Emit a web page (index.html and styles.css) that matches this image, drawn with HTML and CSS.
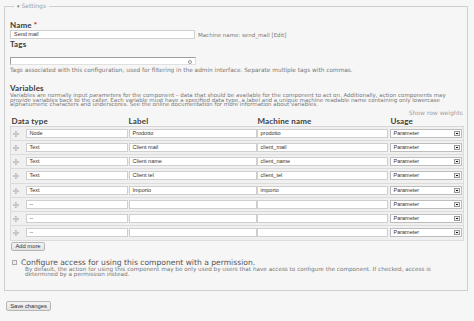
FILE: index.html
```html
<!DOCTYPE html>
<html>
<head>
<meta charset="utf-8">
<link rel="stylesheet" href="styles.css">
</head>
<body>
<div class="page">
  <fieldset class="settings">
    <legend><span class="tri">▾</span> Settings</legend>

    <div class="item item-name">
      <div class="lbl">Name <span class="req">*</span></div>
      <div class="name-row">
        <div class="input name-input">Send mail</div>
        <span class="mname">Machine name: send_mail [Edit]</span>
      </div>
    </div>

    <div class="item item-tags">
      <div class="lbl">Tags</div>
      <div class="input tags-input"><span class="ac"></span></div>
      <div class="desc tags-desc">Tags associated with this configuration, used for filtering in the admin interface. Separate multiple tags with commas.</div>
    </div>

    <div class="item item-vars">
      <div class="lbl">Variables</div>
      <div class="desc vars-desc">Variables are normally input <em>parameters</em> for the component – data that should be available for the component to act on. Additionally, action components may <em>provide</em> variables back to the caller. Each variable must have a specified data type, a label and a unique machine readable name containing only lowercase alphanumeric characters and underscores. See the online documentation for more information about variables.</div>
      <div class="weights">Show row weights</div>
      <table class="vars">
        <colgroup>
          <col class="w-drag"><col class="w-type"><col class="w-label"><col class="w-mach"><col class="w-use">
        </colgroup>
        <thead>
          <tr><th colspan="2">Data type</th><th>Label</th><th>Machine name</th><th>Usage</th></tr>
        </thead>
        <tbody>
          <tr><td class="drag"><svg viewBox="0 0 10 10" width="6" height="6"><path d="M5 0.5 V9.5 M0.5 5 H9.5 M3.5 2 L5 0.5 L6.5 2 M3.5 8 L5 9.5 L6.5 8 M2 3.5 L0.5 5 L2 6.5 M8 3.5 L9.5 5 L8 6.5" fill="none" stroke="#9a9a9a" stroke-width="1"/></svg></td><td class="c-type"><div class="input">Node</div></td><td class="c-label"><div class="input">Prodotto</div></td><td class="c-mach"><div class="input">prodotto</div></td><td class="c-use"><div class="select">Parameter<span class="btn"></span></div></td></tr>
          <tr><td class="drag"><svg viewBox="0 0 10 10" width="6" height="6"><path d="M5 0.5 V9.5 M0.5 5 H9.5 M3.5 2 L5 0.5 L6.5 2 M3.5 8 L5 9.5 L6.5 8 M2 3.5 L0.5 5 L2 6.5 M8 3.5 L9.5 5 L8 6.5" fill="none" stroke="#9a9a9a" stroke-width="1"/></svg></td><td class="c-type"><div class="input">Text</div></td><td class="c-label"><div class="input">Client mail</div></td><td class="c-mach"><div class="input">client_mail</div></td><td class="c-use"><div class="select">Parameter<span class="btn"></span></div></td></tr>
          <tr><td class="drag"><svg viewBox="0 0 10 10" width="6" height="6"><path d="M5 0.5 V9.5 M0.5 5 H9.5 M3.5 2 L5 0.5 L6.5 2 M3.5 8 L5 9.5 L6.5 8 M2 3.5 L0.5 5 L2 6.5 M8 3.5 L9.5 5 L8 6.5" fill="none" stroke="#9a9a9a" stroke-width="1"/></svg></td><td class="c-type"><div class="input">Text</div></td><td class="c-label"><div class="input">Client name</div></td><td class="c-mach"><div class="input">client_name</div></td><td class="c-use"><div class="select">Parameter<span class="btn"></span></div></td></tr>
          <tr><td class="drag"><svg viewBox="0 0 10 10" width="6" height="6"><path d="M5 0.5 V9.5 M0.5 5 H9.5 M3.5 2 L5 0.5 L6.5 2 M3.5 8 L5 9.5 L6.5 8 M2 3.5 L0.5 5 L2 6.5 M8 3.5 L9.5 5 L8 6.5" fill="none" stroke="#9a9a9a" stroke-width="1"/></svg></td><td class="c-type"><div class="input">Text</div></td><td class="c-label"><div class="input">Client tel</div></td><td class="c-mach"><div class="input">client_tel</div></td><td class="c-use"><div class="select">Parameter<span class="btn"></span></div></td></tr>
          <tr><td class="drag"><svg viewBox="0 0 10 10" width="6" height="6"><path d="M5 0.5 V9.5 M0.5 5 H9.5 M3.5 2 L5 0.5 L6.5 2 M3.5 8 L5 9.5 L6.5 8 M2 3.5 L0.5 5 L2 6.5 M8 3.5 L9.5 5 L8 6.5" fill="none" stroke="#9a9a9a" stroke-width="1"/></svg></td><td class="c-type"><div class="input">Text</div></td><td class="c-label"><div class="input">Importo</div></td><td class="c-mach"><div class="input">importo</div></td><td class="c-use"><div class="select">Parameter<span class="btn"></span></div></td></tr>
          <tr><td class="drag"><svg viewBox="0 0 10 10" width="6" height="6"><path d="M5 0.5 V9.5 M0.5 5 H9.5 M3.5 2 L5 0.5 L6.5 2 M3.5 8 L5 9.5 L6.5 8 M2 3.5 L0.5 5 L2 6.5 M8 3.5 L9.5 5 L8 6.5" fill="none" stroke="#9a9a9a" stroke-width="1"/></svg></td><td class="c-type"><div class="input">--</div></td><td class="c-label"><div class="input"></div></td><td class="c-mach"><div class="input"></div></td><td class="c-use"><div class="select">Parameter<span class="btn"></span></div></td></tr>
          <tr><td class="drag"><svg viewBox="0 0 10 10" width="6" height="6"><path d="M5 0.5 V9.5 M0.5 5 H9.5 M3.5 2 L5 0.5 L6.5 2 M3.5 8 L5 9.5 L6.5 8 M2 3.5 L0.5 5 L2 6.5 M8 3.5 L9.5 5 L8 6.5" fill="none" stroke="#9a9a9a" stroke-width="1"/></svg></td><td class="c-type"><div class="input">--</div></td><td class="c-label"><div class="input"></div></td><td class="c-mach"><div class="input"></div></td><td class="c-use"><div class="select">Parameter<span class="btn"></span></div></td></tr>
          <tr><td class="drag"><svg viewBox="0 0 10 10" width="6" height="6"><path d="M5 0.5 V9.5 M0.5 5 H9.5 M3.5 2 L5 0.5 L6.5 2 M3.5 8 L5 9.5 L6.5 8 M2 3.5 L0.5 5 L2 6.5 M8 3.5 L9.5 5 L8 6.5" fill="none" stroke="#9a9a9a" stroke-width="1"/></svg></td><td class="c-type"><div class="input">--</div></td><td class="c-label"><div class="input"></div></td><td class="c-mach"><div class="input"></div></td><td class="c-use"><div class="select">Parameter<span class="btn"></span></div></td></tr>
        </tbody>
      </table>
      <div class="button add-more">Add more</div>
    </div>

    <div class="item item-perm">
      <div class="check-row"><span class="checkbox"></span><span class="check-lbl">Configure access for using this component with a permission.</span></div>
      <div class="desc perm-desc">By default, the action for using this component may be only used by users that have access to configure the component. If checked, access is determined by a permission instead.</div>
    </div>
  </fieldset>

  <div class="button save">Save changes</div>
</div>
</body>
</html>
```

FILE: styles.css
```css
* { box-sizing: border-box; }

html, body {
  margin: 0;
  padding: 0;
  background: #f6f6f6;
}

body {
  font-family: "DejaVu Sans", Lato, sans-serif;
  color: #444;
  font-size: 5.5px;
}

.page {
  padding: 2px 0 0 4px;
  width: 474px;
  height: 321px;
}

.settings {
  width: 463px;
  margin: 0;
  border: 1px solid #cfcfcf;
  padding: 0 3px 13px 5px;
}

.settings legend {
  padding: 0 3px;
  margin-left: 4px;
  font-size: 6px;
  line-height: 8px;
  color: #a0a0a0;
}

.tri {
  font-size: 5px;
  color: #777;
}

.lbl {
  font-family: Lato, "DejaVu Sans", sans-serif;
  font-size: 8px;
  line-height: 8px;
  font-weight: bold;
  color: #3d3d3d;
  letter-spacing: 0.15px;
}

.req { color: #d00; }

.item-name { margin-top: 11px; }

.name-row {
  display: flex;
  align-items: center;
  margin-top: 1px;
}

.input {
  background: #fff;
  border: 1px solid #cfcfcf;
  height: 9px;
  font-size: 5.5px;
  line-height: 7px;
  padding: 0 3px;
  color: #333;
  font-family: "Liberation Sans", Arial, sans-serif;
  white-space: nowrap;
  overflow: hidden;
}

.name-input { width: 185px; }

.mname {
  margin-left: 3px;
  font-size: 5.5px;
  color: #777;
}

.item-tags { margin-top: 1px; }

.tags-input {
  width: 186px;
  margin-top: 9px;
  position: relative;
  border-color: #9d9d9d #e0e0e0 #e0e0e0 #9d9d9d;
  height: 8px;
}

.ac {
  position: absolute;
  right: 3px;
  top: 2px;
  width: 4px;
  height: 4px;
  border: 1px solid #999;
  border-radius: 50%;
}

.desc {
  font-size: 5.5px;
  color: #777;
}

.tags-desc {
  margin-top: 2px;
  line-height: 7px;
  font-size: 5.8px;
}

.item-vars { margin-top: 10px; }

.vars-desc {
  line-height: 4.7px;
  margin-top: 1px;
}

.vars-desc em { font-style: italic; }

.weights {
  text-align: right;
  font-size: 6px;
  line-height: 6px;
  color: #a0a0a0;
  margin-top: 3px;
  padding-right: 1px;
}

table.vars {
  border-collapse: collapse;
  width: 453px;
  margin-top: 0;
  table-layout: fixed;
}

col.w-drag { width: 15px; }
col.w-type { width: 102px; }
col.w-label { width: 129px; }
col.w-mach { width: 133px; }
col.w-use { width: 74px; }

table.vars th {
  text-align: left;
  font-family: Lato, "DejaVu Sans", sans-serif;
  font-size: 8px;
  font-weight: bold;
  color: #3d3d3d;
  height: 10px;
  padding: 0 0 0 1px;
  border-bottom: 1px solid #d6d6d6;
  line-height: 8px;
  letter-spacing: 0.15px;
}

table.vars td {
  height: 14.25px;
  padding: 0;
  border-bottom: 1px solid #dcdcdc;
  background: #f0f0f0;
  vertical-align: middle;
}

table.vars td.drag {
  padding-left: 2px;
  padding-top: 1px;
  border-left: 1px solid #dcdcdc;
}

table.vars td.drag svg { display: block; }

td.c-label { padding-left: 1px !important; }
td.c-mach { padding-right: 2px !important; }
td.c-use { padding-right: 1px !important; border-right: 1px solid #dcdcdc; }

td .input { width: 100%; }

.select {
  position: relative;
  background: #fff;
  border: 1px solid #bdbdbd;
  height: 9px;
  font-size: 5.5px;
  line-height: 7px;
  padding: 0 3px;
  color: #333;
  font-family: "Liberation Sans", Arial, sans-serif;
}

.select .btn {
  position: absolute;
  right: 1px;
  top: 1px;
  width: 6px;
  height: 5px;
  border: 1px solid #999;
  background: #eee;
}

.select .btn::after {
  content: "";
  position: absolute;
  left: 1px;
  top: 1px;
  width: 2px;
  height: 1px;
  background: #111;
}

.button {
  display: inline-block;
  border: 1px solid #b5b5b5;
  border-radius: 2px;
  background: linear-gradient(#f4f4f4, #e2e2e2);
  font-size: 5.8px;
  line-height: 7px;
  padding: 0 2px;
  color: #333;
  font-family: "Liberation Sans", Arial, sans-serif;
}

.add-more {
  margin-top: 1px;
  margin-left: 1px;
  height: 9px;
  width: 34px;
  text-align: center;
}

.item-perm { margin-top: 8px; }

.check-row {
  display: flex;
  align-items: center;
  padding-left: 2px;
  height: 8.5px;
}

.checkbox {
  width: 5px;
  height: 5px;
  border: 1px solid #aaa;
  background: #eee;
}

.check-lbl {
  margin-left: 4px;
  font-size: 7.6px;
  line-height: 8.5px;
  color: #555;
}

.perm-desc {
  padding-left: 15px;
  padding-right: 14px;
  line-height: 4.8px;
  margin-top: 0;
  font-size: 5.7px;
}

.save {
  margin-top: 10px;
  margin-left: 2px;
  height: 10px;
  width: 45px;
  text-align: center;
  line-height: 8px;
}
```
